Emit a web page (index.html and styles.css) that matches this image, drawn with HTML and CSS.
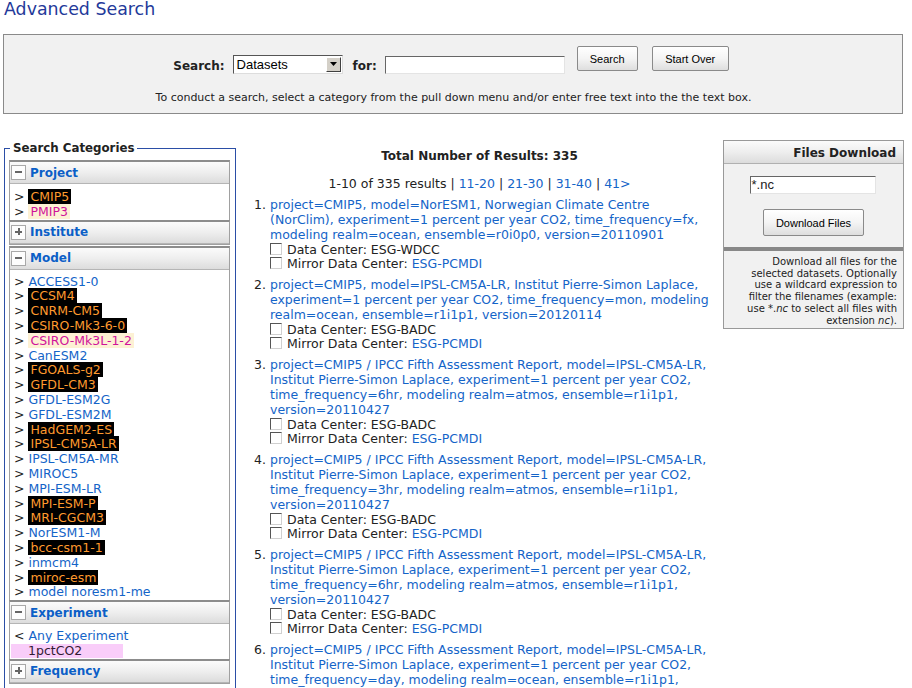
FILE: index.html
```html
<!DOCTYPE html>
<html>
<head>
<meta charset="utf-8">
<title>Advanced Search</title>
<link rel="stylesheet" href="styles.css">
</head>
<body>
<h1 class="title">Advanced Search</h1>
<div class="searchbox">
  <div class="search-row">
    <span class="lbl">Search:</span>
    <span class="select"><span class="select-val">Datasets</span><span class="select-btn"><svg width="9" height="5" viewBox="0 0 9 5"><path d="M1 0h7l-3.5 4z" fill="#000"/></svg></span></span>
    <span class="lbl">for:</span>
    <span class="textin"></span>
    <span class="btn btn-search">Search</span>
    <span class="btn btn-over">Start Over</span>
  </div>
  <p class="hint">To conduct a search, select a category from the pull down menu and/or enter free text into the the text box.</p>
</div>

<div class="main">
  <fieldset class="cats">
    <legend>Search Categories</legend>
    <div class="panel">
      <div class="phead"><span class="tog minus"></span>Project</div>
      <div class="pbody pbody-proj">
        <div class="it">&gt; <a class="hl">CMIP5</a></div>
        <div class="it">&gt; <a class="pl">PMIP3</a></div>
      </div>
    </div>
    <div class="panel closed">
      <div class="phead"><span class="tog plus"></span>Institute</div>
    </div>
    <div class="panel">
      <div class="phead"><span class="tog minus"></span>Model</div>
      <div class="pbody">
        <div class="it">&gt; <a>ACCESS1-0</a></div>
        <div class="it">&gt; <a class="hl">CCSM4</a></div>
        <div class="it">&gt; <a class="hl">CNRM-CM5</a></div>
        <div class="it">&gt; <a class="hl">CSIRO-Mk3-6-0</a></div>
        <div class="it">&gt; <a class="pl">CSIRO-Mk3L-1-2</a></div>
        <div class="it">&gt; <a>CanESM2</a></div>
        <div class="it">&gt; <a class="hl">FGOALS-g2</a></div>
        <div class="it">&gt; <a class="hl">GFDL-CM3</a></div>
        <div class="it">&gt; <a>GFDL-ESM2G</a></div>
        <div class="it">&gt; <a>GFDL-ESM2M</a></div>
        <div class="it">&gt; <a class="hl">HadGEM2-ES</a></div>
        <div class="it">&gt; <a class="hl">IPSL-CM5A-LR</a></div>
        <div class="it">&gt; <a>IPSL-CM5A-MR</a></div>
        <div class="it">&gt; <a>MIROC5</a></div>
        <div class="it">&gt; <a>MPI-ESM-LR</a></div>
        <div class="it">&gt; <a class="hl">MPI-ESM-P</a></div>
        <div class="it">&gt; <a class="hl">MRI-CGCM3</a></div>
        <div class="it">&gt; <a>NorESM1-M</a></div>
        <div class="it">&gt; <a class="hl">bcc-csm1-1</a></div>
        <div class="it">&gt; <a>inmcm4</a></div>
        <div class="it">&gt; <a class="hl">miroc-esm</a></div>
        <div class="it">&gt; <a>model noresm1-me</a></div>
      </div>
    </div>
    <div class="panel">
      <div class="phead"><span class="tog minus"></span>Experiment</div>
      <div class="pbody pbody-exp">
        <div class="it">&lt; <a>Any Experiment</a></div>
        <div class="sel">1pctCO2</div>
      </div>
    </div>
    <div class="panel closed">
      <div class="phead"><span class="tog plus"></span>Frequency</div>
    </div>
  </fieldset>

  <div class="results">
    <div class="total">Total Number of Results: 335</div>
    <div class="pager">1-10 of 335 results | <a>11-20</a> | <a>21-30</a> | <a>31-40</a> | <a>41&gt;</a></div>
    <ol class="rlist">
      <li>
        <a>project=CMIP5, model=NorESM1, Norwegian Climate Centre<br>(NorClim), experiment=1 percent per year CO2, time_frequency=fx,<br>modeling realm=ocean, ensemble=r0i0p0, version=20110901</a>
        <div class="dc"><span class="cb"></span>Data Center: ESG-WDCC</div>
        <div class="dc"><span class="cb"></span>Mirror Data Center: <a>ESG-PCMDI</a></div>
      </li>
      <li>
        <a>project=CMIP5, model=IPSL-CM5A-LR, Institut Pierre-Simon Laplace,<br>experiment=1 percent per year CO2, time_frequency=mon, modeling<br>realm=ocean, ensemble=r1i1p1, version=20120114</a>
        <div class="dc"><span class="cb"></span>Data Center: ESG-BADC</div>
        <div class="dc"><span class="cb"></span>Mirror Data Center: <a>ESG-PCMDI</a></div>
      </li>
      <li>
        <a>project=CMIP5 / IPCC Fifth Assessment Report, model=IPSL-CM5A-LR,<br>Institut Pierre-Simon Laplace, experiment=1 percent per year CO2,<br>time_frequency=6hr, modeling realm=atmos, ensemble=r1i1p1,<br>version=20110427</a>
        <div class="dc"><span class="cb"></span>Data Center: ESG-BADC</div>
        <div class="dc"><span class="cb"></span>Mirror Data Center: <a>ESG-PCMDI</a></div>
      </li>
      <li>
        <a>project=CMIP5 / IPCC Fifth Assessment Report, model=IPSL-CM5A-LR,<br>Institut Pierre-Simon Laplace, experiment=1 percent per year CO2,<br>time_frequency=3hr, modeling realm=atmos, ensemble=r1i1p1,<br>version=20110427</a>
        <div class="dc"><span class="cb"></span>Data Center: ESG-BADC</div>
        <div class="dc"><span class="cb"></span>Mirror Data Center: <a>ESG-PCMDI</a></div>
      </li>
      <li>
        <a>project=CMIP5 / IPCC Fifth Assessment Report, model=IPSL-CM5A-LR,<br>Institut Pierre-Simon Laplace, experiment=1 percent per year CO2,<br>time_frequency=6hr, modeling realm=atmos, ensemble=r1i1p1,<br>version=20110427</a>
        <div class="dc"><span class="cb"></span>Data Center: ESG-BADC</div>
        <div class="dc"><span class="cb"></span>Mirror Data Center: <a>ESG-PCMDI</a></div>
      </li>
      <li>
        <a>project=CMIP5 / IPCC Fifth Assessment Report, model=IPSL-CM5A-LR,<br>Institut Pierre-Simon Laplace, experiment=1 percent per year CO2,<br>time_frequency=day, modeling realm=ocean, ensemble=r1i1p1,<br>version=20110427</a>
        <div class="dc"><span class="cb"></span>Data Center: ESG-BADC</div>
        <div class="dc"><span class="cb"></span>Mirror Data Center: <a>ESG-PCMDI</a></div>
      </li>
    </ol>
  </div>

  <div class="dl">
    <div class="dlhead">Files Download</div>
    <div class="dlbody">
      <div class="dlin">*.nc</div>
      <span class="btn btn-dl">Download Files</span>
    </div>
    <div class="dldesc">Download all files for the<br>selected datasets. Optionally<br>use a wildcard expression to<br>filter the filenames (example:<br>use *.<i>nc</i> to select all files with<br>extension <i>nc</i>).</div>
  </div>
</div>
</body>
</html>
```

FILE: styles.css
```css
html, body {
  margin: 0;
  padding: 0;
  background: #fff;
  overflow: hidden;
}
body {
  font-family: "DejaVu Sans", Verdana, sans-serif;
  font-size: 12.5px;
  color: #222;
  width: 912px;
  height: 688px;
}
a {
  color: #1464c8;
  text-decoration: none;
}
.title {
  margin: 0;
  padding: 0 0 0 4px;
  height: 34px;
  font-size: 17.4px;
  line-height: 19px;
  font-weight: normal;
  color: #24399a;
}
.searchbox {
  margin: 0 9px 0 3px;
  border: 1px solid #8a8a8a;
  background: #f1f1f1;
  padding-top: 11px;
  box-sizing: border-box;
  height: 80px;
}
.search-row {
  display: flex;
  justify-content: center;
  align-items: flex-end;
  height: 28px;
  padding-right: 4px;
}
.lbl {
  font-weight: bold;
  font-size: 12px;
  line-height: 16px;
  margin-bottom: 0;
}
.lbl + .select, .lbl + .textin { margin-left: 8px; }
.select {
  display: flex;
  align-items: center;
  width: 110px;
  height: 19px;
  box-sizing: border-box;
  border: 1px solid #555;
  border-right-color: #ddd;
  border-bottom-color: #ddd;
  background: #fff;
  margin-right: 10px;
}
.select-val {
  flex: 1;
  font-family: "Liberation Sans", Arial, sans-serif;
  font-size: 13px;
  padding-left: 3px;
  color: #000;
}
.select-btn {
  width: 15px;
  height: 15px;
  margin-right: 1px;
  box-sizing: border-box;
  background: #d4d0c8;
  border: 1px solid;
  border-color: #fff #404040 #404040 #fff;
  display: flex;
  align-items: center;
  justify-content: center;
}
.textin {
  width: 180px;
  height: 18px;
  box-sizing: border-box;
  background: #fff;
  border: 1px solid #666;
  border-right-color: #e4e4e4;
  border-bottom-color: #e4e4e4;
  margin-right: 12px;
}
.btn {
  display: inline-flex;
  align-items: center;
  justify-content: center;
  height: 25px;
  box-sizing: border-box;
  border: 1px solid #8a8a8a;
  border-radius: 2px;
  background: linear-gradient(#ffffff, #f4f4f4 50%, #dedede);
  font-family: "Liberation Sans", Arial, sans-serif;
  font-size: 11px;
  color: #000;
}
.btn-search { width: 61px; margin-bottom: 3px; margin-right: 14px; }
.btn-over { width: 77px; margin-bottom: 3px; }
.hint {
  margin: 17px 0 0;
  text-align: center;
  font-size: 11px;
  line-height: 13px;
  color: #222;
  padding-left: 1px;
}

.main {
  display: flex;
  align-items: flex-start;
  margin-top: 27px;
}
.cats {
  width: 232px;
  box-sizing: border-box;
  margin: 0 0 0 4px;
  padding: 0 5px 0 4px;
  border: 1px solid #2b4ea6;
  border-bottom: none;
  height: 600px;
  min-width: 0;
}
.cats legend {
  font-weight: bold;
  font-size: 11.8px;
  line-height: 14px;
  padding: 0 3px;
  margin-left: 1px;
  color: #222;
}
.panel {
  border: 1px solid #a0a0a0;
  border-top: 2px solid #8c8c8c;
  border-bottom: none;
}
.panel.closed {
  border-bottom: 1px solid #a0a0a0;
  margin-bottom: 1px;
}
.panel:first-of-type { margin-top: 5px; }
.phead {
  height: 21px;
  display: flex;
  align-items: center;
  background: linear-gradient(#fbfbfb, #eeeeee 50%, #dcdcdc);
  border-bottom: 1px solid #b5b5b5;
  font-weight: bold;
  color: #0b5fc7;
  font-size: 12px;
}
.tog {
  width: 13px;
  height: 13px;
  border: 1px solid #a8a8a8;
  background: #fdfdfd;
  margin: 0 4px 0 1px;
  position: relative;
  flex: none;
}
.tog::before {
  content: "";
  position: absolute;
  left: 3px;
  top: 5px;
  width: 7px;
  height: 2px;
  background: #666;
}
.plus::after {
  content: "";
  position: absolute;
  left: 5.5px;
  top: 2.5px;
  width: 2px;
  height: 7px;
  background: #666;
}
.pbody {
  padding: 5px 0 0;
  background: #fff;
}
.pbody-proj {
  padding-top: 6px;
}
.pbody-exp {
  padding: 5px 0 1px;
}
.it {
  height: 14.8px;
  line-height: 14.8px;
  padding-left: 4px;
  color: #222;
  white-space: nowrap;
}
.it .hl {
  background: #000;
  color: #ff9a2e;
  padding: 0 2px;
}
.it .pl {
  background: #fdf1d4;
  color: #d0139a;
  padding: 0 2px;
}
.sel {
  margin-left: 1px;
  width: 112px;
  background: #f9cdf9;
  height: 14px;
  line-height: 14px;
  padding-left: 17px;
  box-sizing: border-box;
  color: #331a33;
}

.results {
  width: 487px;
  flex: none;
  padding-top: 8px;
}
.total {
  text-align: center;
  font-weight: bold;
  font-size: 12px;
  line-height: 15px;
}
.pager {
  text-align: center;
  margin-top: 12px;
  line-height: 15px;
}
.rlist {
  margin: 6px 0 0;
  padding-left: 34px;
}
.rlist li {
  line-height: 15px;
  margin-bottom: 7px;
  white-space: nowrap;
}
.dc {
  display: flex;
  align-items: center;
  height: 14px;
  white-space: nowrap;
}
.cb {
  width: 12px;
  height: 12px;
  box-sizing: border-box;
  border: 1px solid;
  border-color: #555 #d0d0d0 #d0d0d0 #555;
  background: #fff;
  margin-right: 5px;
  flex: none;
}
.dc a { margin-left: 4px; }

.dl {
  width: 181px;
  box-sizing: border-box;
  border: 1px solid #999;
  border-top: none;
  background: #f1f1f1;
  margin-top: -1px;
}
.dlhead {
  height: 24px;
  box-sizing: border-box;
  border-top: 1px solid #999;
  border-bottom: 1px solid #b0b0b0;
  background: linear-gradient(#fbfbfb, #eeeeee 50%, #dcdcdc);
  text-align: right;
  padding-right: 7px;
  padding-top: 1px;
  font-weight: bold;
  font-size: 12px;
  line-height: 22px;
}
.dlbody {
  display: flex;
  flex-direction: column;
  align-items: center;
  padding-top: 12px;
  padding-bottom: 11px;
  border-bottom: 4px solid #888;
}
.dlin {
  width: 126px;
  height: 18px;
  box-sizing: border-box;
  border: 1px solid #666;
  border-right-color: #e4e4e4;
  border-bottom-color: #e4e4e4;
  background: #fff;
  font-family: "Liberation Sans", Arial, sans-serif;
  font-size: 13px;
  line-height: 15px;
  padding-left: 1px;
  margin-left: -2px;
}
.btn-dl {
  width: 101px;
  height: 27px;
  margin-top: 15px;
}
.dldesc {
  text-align: right;
  font-size: 10px;
  line-height: 11.7px;
  padding: 5px 6px 2px 0;
  color: #222;
}
.dldesc i { font-style: italic; }
```
